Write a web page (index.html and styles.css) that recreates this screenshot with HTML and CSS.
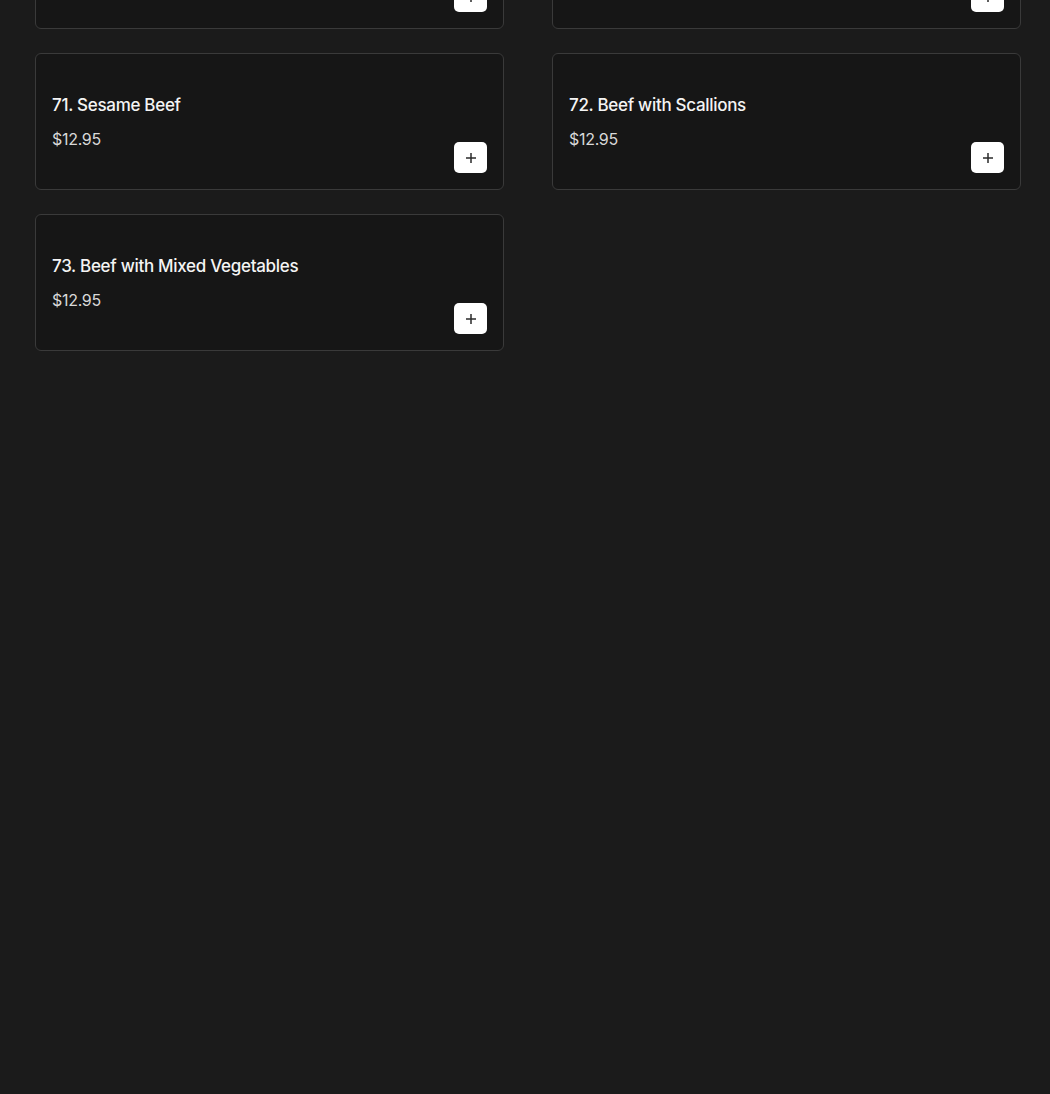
FILE: index.html
```html
<!DOCTYPE html>
<html lang="en">
<head>
    <meta charset="UTF-8">
    <meta name="viewport" content="width=device-width, initial-scale=1.0">
    <title>Menu - Beef</title>
    <link rel="stylesheet" href="styles.css">
</head>
<body>
    <div class="menu-grid">
        <div class="menu-item">
            <div class="item-info">
                <h3 class="item-name">69. Beef with Broccoli</h3>
                <p class="item-price">$12.95</p>
            </div>
            <button class="add-btn" aria-label="Add">
                <svg viewBox="0 0 12 12" width="12" height="12"><path d="M6 1v10M1 6h10" /></svg>
            </button>
        </div>
        <div class="menu-item">
            <div class="item-info">
                <h3 class="item-name">70. Pepper Steak</h3>
                <p class="item-price">$12.95</p>
            </div>
            <button class="add-btn" aria-label="Add">
                <svg viewBox="0 0 12 12" width="12" height="12"><path d="M6 1v10M1 6h10" /></svg>
            </button>
        </div>
        <div class="menu-item">
            <div class="item-info">
                <h3 class="item-name">71. Sesame Beef</h3>
                <p class="item-price">$12.95</p>
            </div>
            <button class="add-btn" aria-label="Add">
                <svg viewBox="0 0 12 12" width="12" height="12"><path d="M6 1v10M1 6h10" /></svg>
            </button>
        </div>
        <div class="menu-item">
            <div class="item-info">
                <h3 class="item-name">72. Beef with Scallions</h3>
                <p class="item-price">$12.95</p>
            </div>
            <button class="add-btn" aria-label="Add">
                <svg viewBox="0 0 12 12" width="12" height="12"><path d="M6 1v10M1 6h10" /></svg>
            </button>
        </div>
        <div class="menu-item">
            <div class="item-info">
                <h3 class="item-name">73. Beef with Mixed Vegetables</h3>
                <p class="item-price">$12.95</p>
            </div>
            <button class="add-btn" aria-label="Add">
                <svg viewBox="0 0 12 12" width="12" height="12"><path d="M6 1v10M1 6h10" /></svg>
            </button>
        </div>
    </div>
</body>
</html>
```

FILE: styles.css
```css
body {
    margin: 0;
    min-height: 100vh;
    background-color: #1b1b1b;
    color: white;
    font-family: Inter, "Open Sans", sans-serif;
    overflow: hidden;
}

/* list is scrolled: the first row sits mostly above the viewport */
.menu-grid {
    display: grid;
    grid-template-columns: 469px 469px;
    column-gap: 48px;
    row-gap: 24px;
    padding: 0 29px 0 35px;
    margin-top: -108px;
}

.menu-item {
    display: flex;
    justify-content: space-between;
    box-sizing: border-box;
    height: 137px;
    padding: 16px;
    background-color: #161616;
    border: 1px solid #3a3a3a;
    border-radius: 6px;
}

.item-info {
    display: flex;
    flex-direction: column;
    justify-content: center;
    gap: 10px;
}

.item-name {
    margin: 0;
    font-size: 17px;
    font-weight: 500;
    line-height: 24px;
    letter-spacing: -0.3px;
    color: #f4f4f4;
}

.item-price {
    margin: 0;
    font-size: 16px;
    font-weight: 400;
    line-height: 24px;
    letter-spacing: -0.3px;
    color: #d9d9d9;
}

.add-btn {
    align-self: flex-end;
    display: flex;
    align-items: center;
    justify-content: center;
    width: 33px;
    height: 31px;
    padding: 0;
    background-color: #fff;
    border: none;
    border-radius: 5px;
    cursor: pointer;
}

.add-btn svg {
    stroke: #2b2b2b;
    stroke-width: 1.5;
    fill: none;
}
```
